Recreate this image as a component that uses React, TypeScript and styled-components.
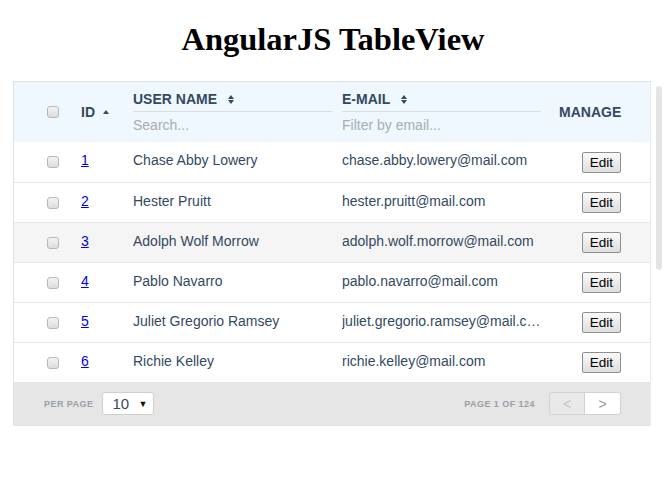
import styled, { createGlobalStyle } from 'styled-components';

const GlobalStyle = createGlobalStyle`
  body {
    margin: 0;
    background: #ffffff;
    font-family: "Liberation Sans", Arial, sans-serif;
  }
`

const Page = styled.div`
  width: 666px;
  height: 493px;
  overflow: hidden;
`

const Title = styled.h1`
  font-family: "Liberation Serif", "Times New Roman", serif;
  font-size: 32.5px;
  font-weight: 700;
  line-height: 37px;
  text-align: center;
  color: #000000;
  margin: 21px 0 23px;
`

const Body = styled.div`
  display: flex;
  align-items: flex-start;
  gap: 5px;
  padding-left: 13px;
`

const Table = styled.div`
  width: 638px;
  box-sizing: border-box;
  border: 1px solid #e2e2e2;
  border-right-color: #eaeaea;
`

const Scrollbar = styled.div`
  width: 6px;
  height: 184px;
  margin-top: 5px;
  border-radius: 3px;
  background: #e4e4e4;
`

const Row = styled.div<{ $head?: boolean; $hover?: boolean }>`
  display: grid;
  grid-template-columns: 67px 52px 209px 217px 1fr;
  align-items: center;
  height: ${p => (p.$head ? '60px' : '40px')};
  box-sizing: border-box;
  background: ${p => (p.$head ? '#eef8fe' : p.$hover ? '#f5f5f5' : '#ffffff')};
  border-top: ${p => (p.$head ? 'none' : '1px solid #e6e6e6')};
  color: #34495e;
  font-size: 14px;

  &:nth-child(2) {
    border-top: none;
  }
`

const CheckCell = styled.div`
  padding-left: 33px;
  display: flex;
  align-items: center;
`

const Check = styled.span`
  width: 10px;
  height: 10px;
  border: 1px solid #b8b8b8;
  border-radius: 3px;
  background: linear-gradient(#f4f4f4, #dcdcdc);
`

const HeadLabel = styled.div`
  font-weight: 700;
  font-size: 14px;
  color: #34495e;
  display: flex;
  align-items: center;
  gap: 8px;
`

const FilterCell = styled.div<{ $w: number }>`
  width: ${p => p.$w}px;
  display: flex;
  flex-direction: column;
  align-self: stretch;
  padding-top: 7px;
  box-sizing: border-box;
`

const FilterLabel = styled(HeadLabel)`
  line-height: 20px;
  padding-bottom: 2px;
  border-bottom: 1px solid #d8dde0;
  gap: 11px;
`

const FilterInput = styled.div`
  height: 26px;
  line-height: 27px;
  color: #a8aeb2;
  font-size: 14px;
`

const Manage = styled.div`
  justify-self: end;
  padding-right: 29px;
  font-weight: 700;
  font-size: 14px;
  color: #34495e;
`

const IdLink = styled.a`
  color: #0000ee;
  text-decoration: underline;
  font-size: 14px;
`

const Cell = styled.div<{ $w?: number }>`
  margin-top: -4px;
  white-space: nowrap;
  overflow: hidden;
  text-overflow: ellipsis;
  max-width: ${p => (p.$w ? `${p.$w}px` : 'none')};
`

const EditCell = styled.div`
  justify-self: end;
  padding-right: 29px;
`

const EditButton = styled.button`
  width: 39px;
  height: 21px;
  padding: 0;
  font-family: "Liberation Sans", Arial, sans-serif;
  font-size: 13.5px;
  color: #000000;
  border: 1px solid #8f8f8f;
  border-radius: 2px;
  background: linear-gradient(#fafafa, #dedede);
`

const Footer = styled.div`
  height: 43px;
  display: flex;
  align-items: center;
  justify-content: space-between;
  padding: 0 29px 0 30px;
  background: #e6e6e6;
`

const FooterGroup = styled.div`
  display: flex;
  align-items: center;
  gap: 9px;
`

const Caption = styled.span`
  font-size: 9px;
  font-weight: 700;
  color: #9aa0a6;
  letter-spacing: 0.45px;
`

const Select = styled.div`
  width: 52px;
  height: 23px;
  box-sizing: border-box;
  border: 1px solid #cfcfcf;
  border-radius: 3px;
  background: #ffffff;
  display: flex;
  align-items: center;
  justify-content: space-between;
  padding: 0 6px 0 9px;
  font-size: 15px;
  color: #34495e;
`

const Arrow = styled.span`
  font-size: 9px;
  color: #111111;
`

const Pager = styled.div`
  display: flex;
  margin-left: 5px;
`

const PageButton = styled.div<{ $disabled?: boolean; $side: 'left' | 'right' }>`
  width: 36px;
  height: 23px;
  box-sizing: border-box;
  display: flex;
  align-items: center;
  justify-content: center;
  font-size: 14px;
  border: 1px solid #d2d2d2;
  border-left-width: ${p => (p.$side === 'right' ? '0' : '1px')};
  border-radius: ${p => (p.$side === 'left' ? '3px 0 0 3px' : '0 3px 3px 0')};
  background: ${p => (p.$disabled ? '#e9e9e9' : '#ffffff')};
  color: ${p => (p.$disabled ? '#c4c4c4' : '#9a9a9a')};
`

const SortUp = () => (
  <svg width="6" height="4" viewBox="0 0 6 4">
    <path d="M0 4 L3 0 L6 4 Z" fill="#34495e" />
  </svg>
)

const SortBoth = () => (
  <svg width="6" height="9" viewBox="0 0 6 9">
    <path d="M0 4 L3 0 L6 4 Z M0 5 L3 9 L6 5 Z" fill="#34495e" />
  </svg>
)

const users = [
  { id: 1, name: 'Chase Abby Lowery', email: 'chase.abby.lowery@mail.com' },
  { id: 2, name: 'Hester Pruitt', email: 'hester.pruitt@mail.com' },
  { id: 3, name: 'Adolph Wolf Morrow', email: 'adolph.wolf.morrow@mail.com' },
  { id: 4, name: 'Pablo Navarro', email: 'pablo.navarro@mail.com' },
  { id: 5, name: 'Juliet Gregorio Ramsey', email: 'juliet.gregorio.ramsey@mail.com' },
  { id: 6, name: 'Richie Kelley', email: 'richie.kelley@mail.com' },
]

const App = () => {
  return (
    <Page>
      <GlobalStyle />
      <Title>AngularJS TableView</Title>
      <Body>
        <Table>
          <Row $head>
            <CheckCell><Check /></CheckCell>
            <HeadLabel>ID <SortUp /></HeadLabel>
            <FilterCell $w={199}>
              <FilterLabel>USER NAME <SortBoth /></FilterLabel>
              <FilterInput>Search...</FilterInput>
            </FilterCell>
            <FilterCell $w={199}>
              <FilterLabel>E-MAIL <SortBoth /></FilterLabel>
              <FilterInput>Filter by email...</FilterInput>
            </FilterCell>
            <Manage>MANAGE</Manage>
          </Row>
          {users.map(user => (
            <Row key={user.id} $hover={user.id === 3}>
              <CheckCell><Check /></CheckCell>
              <Cell><IdLink href="#">{user.id}</IdLink></Cell>
              <Cell>{user.name}</Cell>
              <Cell $w={199}>{user.email}</Cell>
              <EditCell><EditButton>Edit</EditButton></EditCell>
            </Row>
          ))}
          <Footer>
            <FooterGroup>
              <Caption>PER PAGE</Caption>
              <Select>10 <Arrow>▼</Arrow></Select>
            </FooterGroup>
            <FooterGroup>
              <Caption>PAGE 1 OF 124</Caption>
              <Pager>
                <PageButton $side="left" $disabled>&lt;</PageButton>
                <PageButton $side="right">&gt;</PageButton>
              </Pager>
            </FooterGroup>
          </Footer>
        </Table>
        <Scrollbar />
      </Body>
    </Page>
  );
};

export default App;
